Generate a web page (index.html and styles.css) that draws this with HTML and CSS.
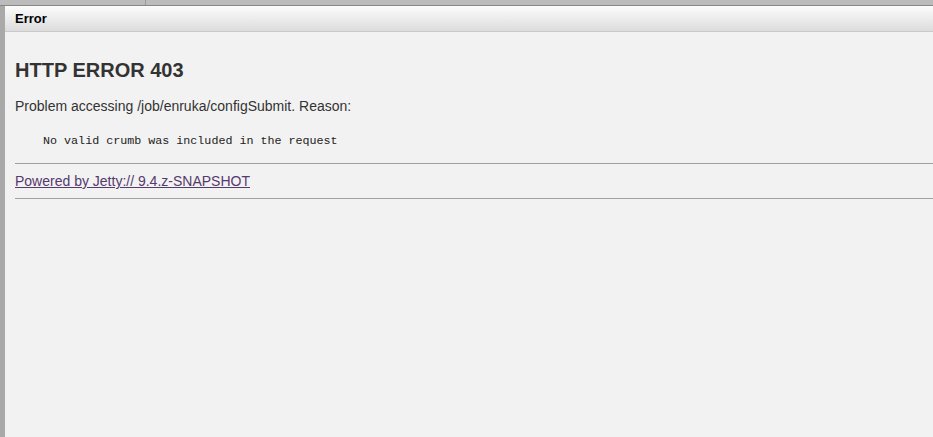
FILE: index.html
```html
<!DOCTYPE html>
<html>
<head>
<meta charset="utf-8">
<title>Error 403 No valid crumb was included in the request</title>
<link rel="stylesheet" href="styles.css">
</head>
<body>
<div class="topstrip">
  <div class="tab-left"></div>
  <div class="tab-rest"></div>
</div>
<div class="window">
  <div class="titlebar">Error</div>
  <div class="content">
    <h2 class="title">HTTP ERROR 403</h2>
    <p class="problem">Problem accessing /job/enruka/configSubmit. Reason:</p>
    <pre class="reason">    No valid crumb was included in the request</pre>
    <hr class="rule rule-top">
    <a class="powered" href="#">Powered by Jetty:// 9.4.z-SNAPSHOT</a>
    <hr class="rule rule-bottom">
  </div>
</div>
</body>
</html>
```
FILE: styles.css
```css
html, body {
  margin: 0;
  padding: 0;
  height: 100%;
  background: #f2f2f2;
  overflow: hidden;
}
body {
  display: flex;
  flex-direction: column;
  font-family: "Liberation Sans", Arial, sans-serif;
}
.topstrip {
  display: flex;
  height: 5px;
  background: #bcbcbc;
  border-bottom: 1px solid #878787;
  flex: none;
}
.tab-left {
  width: 145px;
  border-right: 1px solid #9a9a9a;
}
.tab-rest {
  flex: 1;
}
.window {
  flex: 1;
  display: flex;
  flex-direction: column;
  border-left: 5px solid #a9a9a9;
}
.titlebar {
  height: 25px;
  line-height: 25px;
  border-bottom: 1px solid #c9c9c9;
  background: linear-gradient(#fcfcfc, #dcdcdc);
  padding-left: 10px;
  font-size: 13px;
  font-weight: bold;
  color: #000;
}
.content {
  flex: 1;
  padding: 27px 0 0 10px;
  color: #333;
}
.title {
  margin: 0;
  font-size: 20px;
  line-height: 23px;
  font-weight: bold;
  color: #333;
}
.problem {
  margin: 16px 0 0;
  font-size: 14px;
  line-height: 16px;
}
.reason {
  margin: 20px 0 0;
  font-family: "Liberation Mono", "Courier New", monospace;
  font-size: 11.7px;
  line-height: 14px;
  color: #222;
}
.rule {
  border: 0;
  border-top: 1px solid #a0a0a0;
  height: 0;
  margin: 0;
}
.rule-top {
  margin-top: 15px;
}
.powered {
  display: block;
  margin-top: 9px;
  font-size: 14px;
  line-height: 16px;
  color: #553a6e;
  width: max-content;
}
.rule-bottom {
  margin-top: 9px;
}
```
